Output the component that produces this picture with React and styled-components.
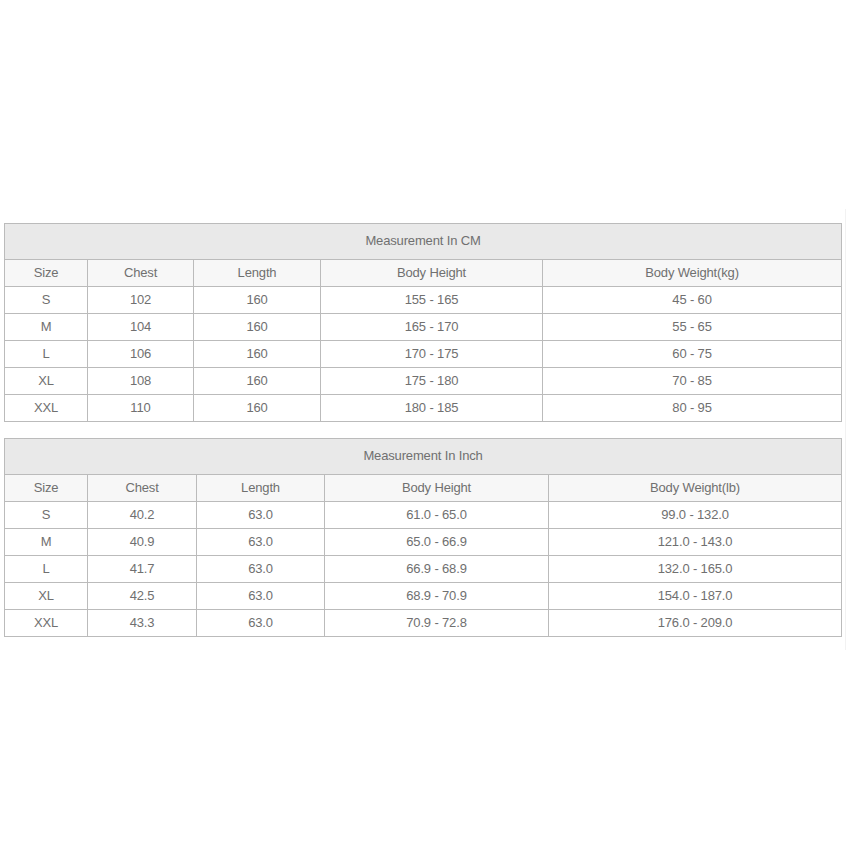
import React from "react";
import styled, { createGlobalStyle } from "styled-components";

const GlobalStyle = createGlobalStyle`
  body {
    margin: 0;
    background: #fff;
    font-family: "Liberation Sans", Arial, sans-serif;
  }
`;

const Page = styled.div`
  width: 850px;
  height: 850px;
  padding-top: 209px;
  box-sizing: border-box;
`;

const Frame = styled.div`
  width: 846px;
  height: 441px;
  box-sizing: border-box;
  border-right: 1px solid #f2f2f2;
  padding: 14px 0 0 4px;
  display: flex;
  flex-direction: column;
  gap: 16px;
`;

const Table = styled.table`
  width: 837px;
  border-collapse: collapse;
  table-layout: fixed;
  color: #707070;
  font-size: 13px;
  letter-spacing: -0.15px;
`;

const Cell = styled.td`
  border: 1px solid #bbb;
  text-align: center;
  padding: 0 0 1px;
  height: 25px;
  background: ${(p) => (p.$head ? "#f7f7f7" : "#fff")};
`;

const Title = styled.td`
  border: 1px solid #bbb;
  text-align: center;
  padding: 0 0 3px;
  height: 32px;
  background: #e9e9e9;
`;

const cm = {
  title: "Measurement In CM",
  widths: [83, 106, 127, 222, 299],
  head: ["Size", "Chest", "Length", "Body Height", "Body Weight(kg)"],
  rows: [
    ["S", "102", "160", "155 - 165", "45 - 60"],
    ["M", "104", "160", "165 - 170", "55 - 65"],
    ["L", "106", "160", "170 - 175", "60 - 75"],
    ["XL", "108", "160", "175 - 180", "70 - 85"],
    ["XXL", "110", "160", "180 - 185", "80 - 95"],
  ],
};

const inch = {
  title: "Measurement In Inch",
  widths: [83, 109, 128, 224, 293],
  head: ["Size", "Chest", "Length", "Body Height", "Body Weight(lb)"],
  rows: [
    ["S", "40.2", "63.0", "61.0 - 65.0", "99.0 - 132.0"],
    ["M", "40.9", "63.0", "65.0 - 66.9", "121.0 - 143.0"],
    ["L", "41.7", "63.0", "66.9 - 68.9", "132.0 - 165.0"],
    ["XL", "42.5", "63.0", "68.9 - 70.9", "154.0 - 187.0"],
    ["XXL", "43.3", "63.0", "70.9 - 72.8", "176.0 - 209.0"],
  ],
};

function SizeTable({ data }) {
  return (
    <Table>
      <colgroup>
        {data.widths.map((w, i) => (
          <col key={i} style={{ width: w }} />
        ))}
      </colgroup>
      <tbody>
        <tr>
          <Title colSpan={5}>{data.title}</Title>
        </tr>
        <tr>
          {data.head.map((h) => (
            <Cell $head key={h}>
              {h}
            </Cell>
          ))}
        </tr>
        {data.rows.map((r) => (
          <tr key={r[0]}>
            {r.map((c, i) => (
              <Cell key={i}>{c}</Cell>
            ))}
          </tr>
        ))}
      </tbody>
    </Table>
  );
}

export default function App() {
  return (
    <Page>
      <GlobalStyle />
      <Frame>
        <SizeTable data={cm} />
        <SizeTable data={inch} />
      </Frame>
    </Page>
  );
}
